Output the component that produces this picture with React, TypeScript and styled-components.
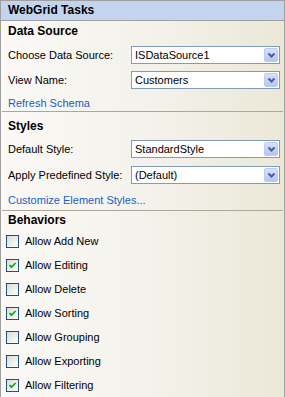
import React from "react";
import styled, { createGlobalStyle } from "styled-components";

const GlobalStyle = createGlobalStyle`
  html, body {
    margin: 0;
    padding: 0;
    background: #ffffff;
  }
  body {
    font-family: "Liberation Sans", Arial, sans-serif;
    font-size: 11px;
    color: #000;
  }
`

const Panel = styled.div`
  width: 285px;
  height: 397px;
  box-sizing: border-box;
  border: 1px solid #a0a0a0;
  border-bottom: 0;
  overflow: hidden;
  background: linear-gradient(to right, #faf9f6 0%, #f3f1ea 55%, #ebe8d8 100%);
`

const Header = styled.div`
  height: 19px;
  line-height: 19px;
  padding-left: 7px;
  font-size: 12px;
  font-weight: bold;
  background-color: #c3d4ef;
  border-bottom: 1px solid #a0a0a0;
`

const Section = styled.div<{ $last?: boolean; $bottom: number }>`
  display: flex;
  flex-direction: column;
  margin: 0 1px;
  padding-bottom: ${(p) => p.$bottom}px;
  border-bottom: ${(p) => (p.$last ? "0" : "1px solid #aca899")};
`

const SectionTitle = styled.div<{ $top: number }>`
  margin-top: ${(p) => p.$top}px;
  padding-left: 6px;
  height: 18px;
  line-height: 18px;
  font-size: 12px;
  font-weight: bold;
`

const FieldRow = styled.div<{ $top: number }>`
  display: flex;
  align-items: center;
  height: 18px;
  margin-top: ${(p) => p.$top}px;
  padding-left: 6px;
`

const FieldLabel = styled.div`
  width: 123px;
  white-space: nowrap;
`

const Select = styled.div`
  display: flex;
  align-items: center;
  justify-content: space-between;
  width: 149px;
  height: 18px;
  box-sizing: border-box;
  border: 1px solid #7f9db9;
  background: #fff;
  padding: 1px 1px 1px 3px;
`

const DropButton = styled.div`
  width: 14px;
  height: 14px;
  box-sizing: border-box;
  border: 1px solid #bccbf1;
  border-radius: 2px;
  background: linear-gradient(to bottom, #d6e1fd 0%, #c1d2fb 50%, #b3c7f6 100%);
  display: flex;
  align-items: center;
  justify-content: center;
`

const TaskLink = styled.a<{ $top: number }>`
  display: block;
  margin-top: ${(p) => p.$top}px;
  padding-left: 6px;
  height: 14px;
  line-height: 14px;
  color: #215dc6;
  text-decoration: none;
  white-space: nowrap;
`

const CheckRow = styled.label`
  display: flex;
  align-items: center;
  gap: 6px;
  height: 24px;
  padding-left: 4px;
`

const Box = styled.span`
  width: 13px;
  height: 13px;
  box-sizing: border-box;
  border: 1px solid #1c5180;
  background: linear-gradient(135deg, #dcdcd5 0%, #f0f0ea 55%, #ffffff 100%);
  display: flex;
  align-items: center;
  justify-content: center;
`

function Chevron() {
  return (
    <svg width="9" height="7" viewBox="0 0 9 7">
      <polyline
        points="1.5,1.5 4.5,4.5 7.5,1.5"
        fill="none"
        stroke="#4d6185"
        strokeWidth="2"
      />
    </svg>
  );
}

function Tick() {
  return (
    <svg width="9" height="9" viewBox="0 0 9 9">
      <polyline
        points="1.5,4 3.5,6.2 7.5,2"
        fill="none"
        stroke="#21a121"
        strokeWidth="1.8"
      />
    </svg>
  );
}

function Field({ label, value, top }: { label: string; value: string; top: number }) {
  return (
    <FieldRow $top={top}>
      <FieldLabel>{label}</FieldLabel>
      <Select>
        <span>{value}</span>
        <DropButton>
          <Chevron />
        </DropButton>
      </Select>
    </FieldRow>
  );
}

function Check({ label, checked }: { label: string; checked?: boolean }) {
  return (
    <CheckRow>
      <Box>{checked && <Tick />}</Box>
      <span>{label}</span>
    </CheckRow>
  );
}

const behaviors = [
  { label: "Allow Add New", checked: false },
  { label: "Allow Editing", checked: true },
  { label: "Allow Delete", checked: false },
  { label: "Allow Sorting", checked: true },
  { label: "Allow Grouping", checked: false },
  { label: "Allow Exporting", checked: false },
  { label: "Allow Filtering", checked: true },
];

export default function App() {
  return (
    <>
      <GlobalStyle />
      <Panel>
        <Header>WebGrid Tasks</Header>
        <Section $bottom={1}>
          <SectionTitle $top={1}>Data Source</SectionTitle>
          <Field top={6} label="Choose Data Source:" value="ISDataSource1" />
          <Field top={7} label="View Name:" value="Customers" />
          <TaskLink $top={7} href="#">Refresh Schema</TaskLink>
        </Section>
        <Section $bottom={3}>
          <SectionTitle $top={5}>Styles</SectionTitle>
          <Field top={5} label="Default Style:" value="StandardStyle" />
          <Field top={8} label="Apply Predefined Style:" value="(Default)" />
          <TaskLink $top={9} href="#">Customize Element Styles...</TaskLink>
        </Section>
        <Section $last $bottom={0}>
          <SectionTitle $top={0}>Behaviors</SectionTitle>
          {behaviors.map((b) => (
            <Check key={b.label} label={b.label} checked={b.checked} />
          ))}
        </Section>
      </Panel>
    </>
  );
}
